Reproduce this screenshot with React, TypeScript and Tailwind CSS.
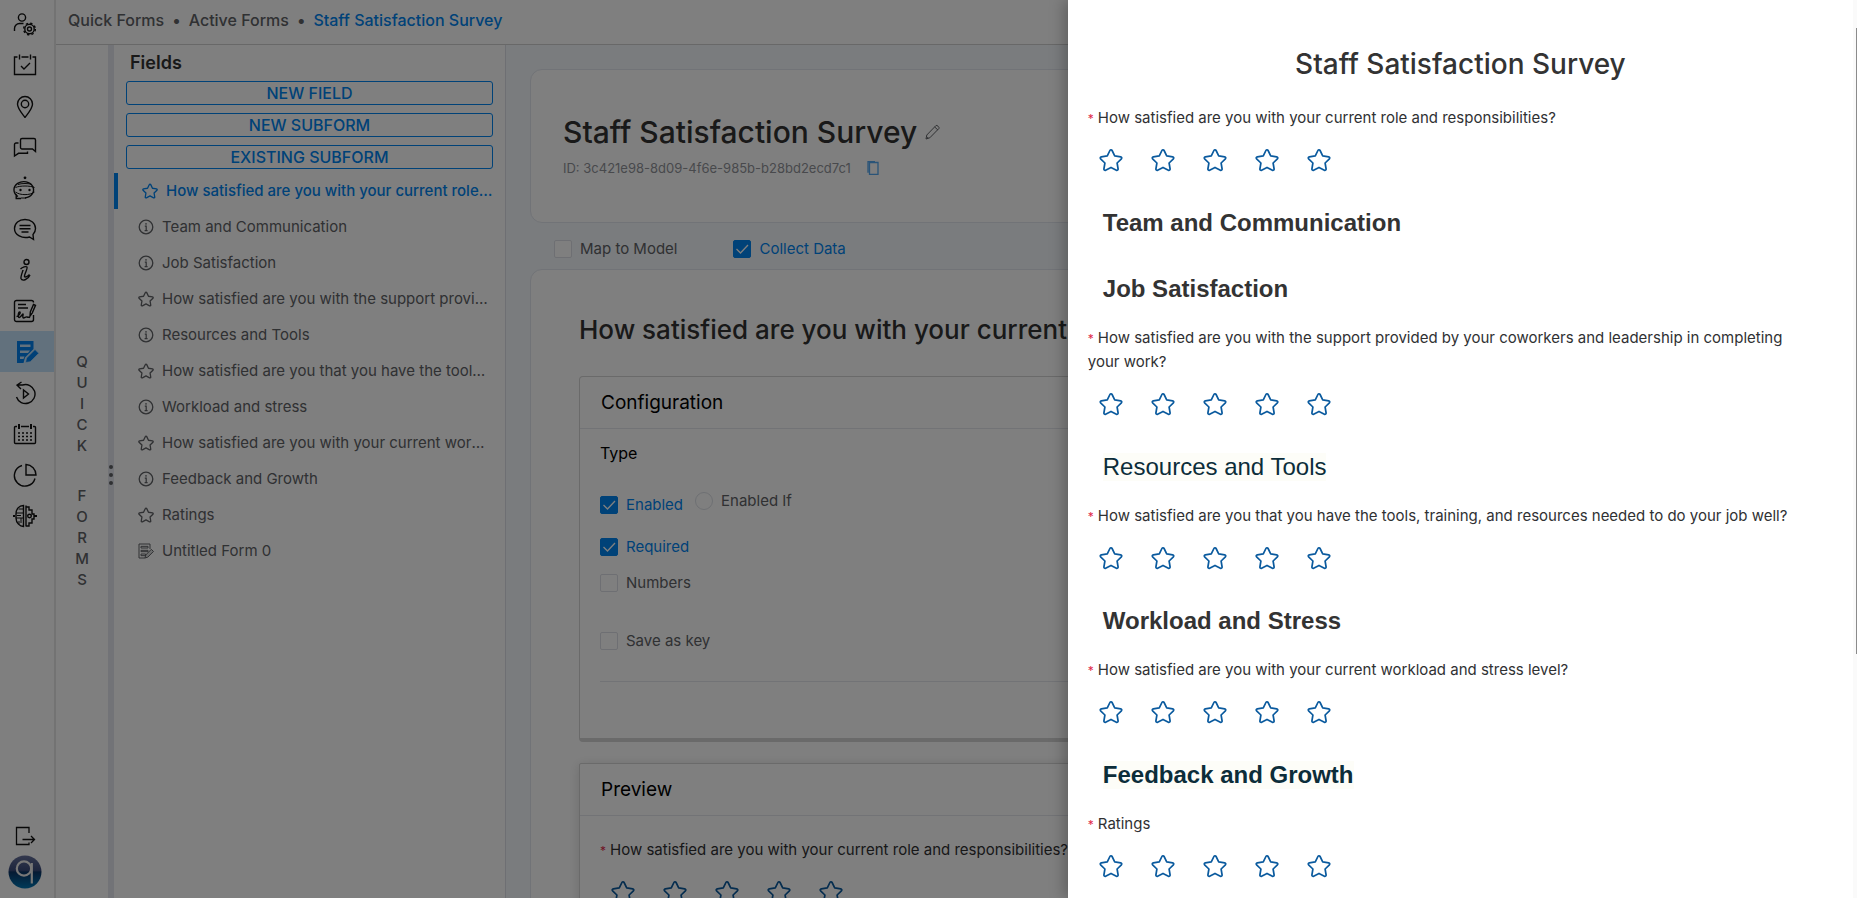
import React, { useState } from "react";

const STAR =
  "M12 1.8c.5 0 .9.3 1.1.7l2.6 5.4 6 .9c1 .2 1.4 1.300.7 2l-4.300 4.200 1 6c.1 1-.9 1.700-1.700 1.200L12 19.400l-5.400 2.800c-.8.5-1.800-.2-1.700-1.200l1-6-4.300-4.200c-.7-.7-.3-1.800.7-2l6-.9 2.600-5.400c.2-.4.6-.7 1.100-.7z";

function StarIcon({ className, stroke }: { className: string; stroke: number }) {
  return (
    <svg viewBox="0 0 24 24" className={className} fill="none" stroke="currentColor" strokeWidth={stroke} strokeLinejoin="round" aria-hidden="true">
      <path d={STAR} />
    </svg>
  );
}

function InfoIcon() {
  return (
    <svg viewBox="0 0 16 16" className="size-4 shrink-0" fill="none" stroke="currentColor" strokeWidth="1.300" aria-hidden="true">
      <circle cx="8" cy="8" r="6.800" />
      <path d="M6.800 7.200H8.200V11.600M6.600 11.600h3" strokeWidth="1.200" />
      <circle cx="8" cy="4.900" r=".8" fill="currentColor" stroke="none" />
    </svg>
  );
}

function FormIcon({ className }: { className: string }) {
  return (
    <svg viewBox="0 0 24 24" className={className} fill="none" stroke="currentColor" strokeWidth="1.500" aria-hidden="true">
      <path d="M18 9V1.500H1.500v21h9" />
      <path d="M4.500 5h10.500v2.500H4.500zM4.500 11h10.500v2H4.500zM4.500 16.500h7v2.500h-7z" />
      <path d="M10.500 22.500l1-4.500 8.500-8.500 3.200 3.200-8.500 8.500z" fill="currentColor" fillOpacity=".25" />
    </svg>
  );
}

const navIcons: { name: string; art: React.ReactNode }[] = [
  {
    name: "User settings",
    art: (
      <>
        <circle cx="9" cy="5.500" r="3.600" />
        <path d="M1.500 19v-2.500a5 5 0 0 1 5-5h4" />
        <circle cx="16.500" cy="17" r="2" />
        <circle cx="16.500" cy="17" r="4.700" />
        <circle cx="16.500" cy="17" r="5.800" strokeWidth="1.500" strokeDasharray="2.280 2.280" />
      </>
    ),
  },
  {
    name: "Tasks",
    art: (
      <>
        <path d="M4.500 4H1.500v17.500h21V4h-3M8.500 4h7" />
        <path d="M6.500 1.500v5M17.500 1.500v5M8 13l3 3 6-6" />
      </>
    ),
  },
  {
    name: "Locations",
    art: (
      <>
        <path d="M12 23.500C9 19.500 4.500 14.500 4.500 10a7.500 7.500 0 0 1 15 0c0 4.500-4.500 9.500-7.500 13.500z" />
        <circle cx="12" cy="10" r="3.700" />
      </>
    ),
  },
  {
    name: "Conversations",
    art: (
      <>
        <path d="M9 3.500h12a1.500 1.500 0 0 1 1.500 1.500v11.500l-3-2.500H9A1.500 1.500 0 0 1 7.500 12.500V5A1.500 1.500 0 0 1 9 3.500z" />
        <path d="M5.500 8H3a1.500 1.500 0 0 0-1.500 1.500v11.500l4-2.700H14.500V16.500" />
      </>
    ),
  },
  {
    name: "Assistant",
    art: (
      <>
        <path d="M5 20.500A9.800 8.200 0 1 1 12 22M3.200 18v4.500H8" />
        <path d="M5 8.500C8 7.200 16 7.200 19 8.500M2.500 11.500C7 9.500 17 9.500 21.500 11.500M2.500 16C7 19.500 17 19.500 21.500 16M8 22h5" strokeWidth="1" />
        <circle cx="7.500" cy="14" r="1.200" fill="currentColor" stroke="none" />
        <circle cx="16.500" cy="14" r="1.200" fill="currentColor" stroke="none" />
        <circle cx="12" cy="1.800" r="1.400" fill="currentColor" stroke="none" />
      </>
    ),
  },
  {
    name: "Messages",
    art: (
      <>
        <path d="M20.500 22.500l-4-2.500C9 22 1.500 18 1.500 11.500 1.500 6 6 2.500 12 2.500S22.500 6 22.500 11.500c0 2.500-1 4.500-2.500 6z" />
        <path d="M6.500 8.500h11M6.500 11.700h11M8.500 15h7" />
      </>
    ),
  },
  {
    name: "Information",
    art: (
      <>
        <circle cx="13.500" cy="4" r="2.500" />
        <path d="M7.500 11c2-2 5.500-3 6.500-2s-3 8-2.500 9.500 3.500-.5 5-2M10 12c0 1-2.500 6-2 8.500 1 3 7 1.500 9-3.500" />
      </>
    ),
  },
  {
    name: "Signatures",
    art: (
      <>
        <path d="M20.500 16v4.500a2 2 0 0 1-2 2H3.500a2 2 0 0 1-2-2v-17a2 2 0 0 1 2-2H18.500a2 2 0 0 1 2 2" />
        <path d="M5 5.500h8M5 9h10" />
        <path d="M3.500 17.500c2 0 4.500-3.500 3.500-4.500s-2.500 3-1.500 5 4-3 4.500-3-1 4 .5 4 2-1.500 3.500-1 2 .5 3 0" />
        <path d="M17 17l.3-4L20.500 5.500l2 .8-3.200 7.500z" />
      </>
    ),
  },
  { name: "Quick Forms", art: null },
  {
    name: "History",
    art: (
      <>
        <path d="M3.500 16a9.500 9.500 0 1 0 6-12H4M8.500 1L4 4l4 4" />
        <path d="M10.500 9v8l5-4z" />
      </>
    ),
  },
  {
    name: "Calendar",
    art: (
      <>
        <path d="M4 4.500H2.500a1 1 0 0 0-1 1v15a1 1 0 0 0 1 1h19a1 1 0 0 0 1-1v-15a1 1 0 0 0-1-1H20M8 4.500h8" />
        <path d="M6 2v5M18 2v5" strokeWidth="2" />
        <path d="M5 11h14M5 14.500h14M5 18h14" strokeWidth="1.600" strokeDasharray="2 2" />
      </>
    ),
  },
  {
    name: "Reports",
    art: (
      <>
        <path d="M9 2.500a10.500 10.500 0 1 0 13 13" />
        <path d="M13 1.500v10.500h10a10.500 10.500 0 0 0-10-10.500z" />
      </>
    ),
  },
  {
    name: "Artificial intelligence",
    art: (
      <>
        <path d="M10.500 1.500C6 1.500 3 5 3 10v4c0 5 4 8.500 7.500 8.500z" />
        <path d="M3 9h7.500M3 14h7.500M4 11.500h4M6 17v3M8 14v5M5.500 5h5" strokeWidth="1" />
        <path d="M13 1.500v21M13 3h3v3h3v4h2v5h-2v4h-3v3h-3" />
        <circle cx="16.500" cy="12" r="1.800" />
        <path d="M0 12h2M21 12h3" strokeWidth="2" />
      </>
    ),
  },
];

function Sidebar() {
  return (
    <nav className="flex w-14 shrink-0 flex-col border-r-2 border-[#e6e6e6] bg-white pt-[3px] text-[#111]">
      {navIcons.map(({ name, art }) => (
        <button
          key={name}
          aria-label={name}
          className={
            art ? "flex h-[41px] items-center justify-center pr-1" : "flex h-[41px] items-center justify-center bg-[#c4e3fb] text-[#0080ee]"
          }
        >
          {art ? (
            <svg viewBox="0 0 24 24" className="size-6" fill="none" stroke="currentColor" strokeWidth="1.400" aria-hidden="true">
              {art}
            </svg>
          ) : (
            <svg viewBox="0 0 24 24" className="size-6" fill="currentColor" aria-hidden="true">
              <path d="M2 1h16.500v8L10 17.500 8.500 23H2zM5 4.500v2.500h10.500V4.500zm0 6v2.500h8l2-2.500zm0 6V19h3.500l1-2.500z" fillRule="evenodd" />
              <path d="M10.500 22.500l1-4.500 8.500-8.500 3.800 3.800-8.500 8.500z" stroke="#c4e3fb" strokeWidth=".7" />
            </svg>
          )}
        </button>
      ))}
      <button aria-label="Sign out" className="mt-auto flex h-9 items-center justify-center pr-1">
        <svg viewBox="0 0 24 24" className="size-6" fill="none" stroke="currentColor" strokeWidth="1.300" aria-hidden="true">
          <path d="M16 9V3.500H3.500v17H16v-2M9.500 15.500h12M18 12l3.500 3.500L18 19" />
        </svg>
      </button>
      <button aria-label="Account" className="mb-2 flex h-9 items-center justify-center pr-1">
        <svg viewBox="0 0 34 34" className="size-[34px]" aria-hidden="true">
          <defs>
            <linearGradient id="orb" x1="0" y1="0" x2="0" y2="1">
              <stop offset="0" stopColor="#66709a" />
              <stop offset=".45" stopColor="#3c4c7c" />
              <stop offset=".5" stopColor="#0b3566" />
              <stop offset="1" stopColor="#0076b4" />
            </linearGradient>
          </defs>
          <circle cx="17" cy="17" r="16.500" fill="url(#orb)" />
          <circle cx="16" cy="13.500" r="7.200" fill="none" stroke="#eee" strokeWidth="2.200" />
          <path d="M23.800 8v20.500" stroke="#eee" strokeWidth="2.200" fill="none" />
        </svg>
      </button>
    </nav>
  );
}

const fields: { kind: "star" | "info" | "form"; label: string }[] = [
  { kind: "star", label: "How satisfied are you with your current role and responsibilities?" },
  { kind: "info", label: "Team and Communication" },
  { kind: "info", label: "Job Satisfaction" },
  { kind: "star", label: "How satisfied are you with the support provided by your coworkers" },
  { kind: "info", label: "Resources and Tools" },
  { kind: "star", label: "How satisfied are you that you have the tools, training, and resources" },
  { kind: "info", label: "Workload and stress" },
  { kind: "star", label: "How satisfied are you with your current workload and stress level?" },
  { kind: "info", label: "Feedback and Growth" },
  { kind: "star", label: "Ratings" },
  { kind: "form", label: "Untitled Form 0" },
];

function FieldsPanel() {
  return (
    <section className="flex w-[392px] shrink-0 flex-col border-r border-[#dcdfe6] bg-white">
      <h2 className="px-4 pt-1 pb-1 text-lg leading-7 font-semibold text-[#333]">Fields</h2>
      <div className="flex flex-col gap-2 pr-3 pl-3">
        {["NEW FIELD", "NEW SUBFORM", "EXISTING SUBFORM"].map((label) => (
          <button key={label} className="h-6 rounded-[3px] border border-[#0084f0] text-base leading-5 font-medium text-[#0084f0]">
            {label}
          </button>
        ))}
      </div>
      <ul className="mt-1">
        {fields.map(({ kind, label }, i) => (
          <li key={label}>
            <button
              className={
                i === 0
                  ? "flex h-9 w-full items-center gap-2 border-l-4 border-[#0084f0] pr-3 pl-6 text-left text-[15px] font-medium text-[#0084f0]"
                  : "flex h-9 w-full items-center gap-2 pr-3.5 pl-6 text-left text-[15px] text-[#606266]"
              }
            >
              {kind === "star" && <StarIcon className="size-4 shrink-0" stroke={2} />}
              {kind === "info" && <InfoIcon />}
              {kind === "form" && <FormIcon className="size-4 shrink-0" />}
              <span className="truncate">{label}</span>
            </button>
          </li>
        ))}
      </ul>
    </section>
  );
}

function Check({ label, defaultChecked = false }: { label: string; defaultChecked?: boolean }) {
  return (
    <label className="flex w-fit items-center gap-2 text-[15px] leading-[18px] text-[#606266] has-checked:text-[#0084f0]">
      <span className="grid size-[18px] place-items-center">
        <input
          type="checkbox"
          defaultChecked={defaultChecked}
          className="peer col-start-1 row-start-1 size-[18px] appearance-none rounded-[2px] border border-[#dcdfe6] bg-white checked:border-[#0084f0] checked:bg-[#0084f0]"
        />
        <svg viewBox="0 0 18 18" className="pointer-events-none col-start-1 row-start-1 size-[18px] opacity-0 peer-checked:opacity-100" fill="none" stroke="#fff" strokeWidth="1.300" aria-hidden="true">
          <path d="M3.500 9l4 4L15 5" />
        </svg>
      </span>
      {label}
    </label>
  );
}

function Rating({ label }: { label: string }) {
  const [value, setValue] = useState(0);
  return (
    <div className="pb-[22px]">
      <p className="pr-5 text-[15px] leading-6 text-[#303133]">
        <span className="mr-1 text-xs text-[#e0284a]">*</span>
        {label}
      </p>
      <div role="group" aria-label={label} className="mt-[18px] flex gap-7 pl-[11px] text-[#0a5a9e]">
        {[1, 2, 3, 4, 5].map((n) => (
          <button key={n} aria-label={`${n} of 5`} aria-pressed={n <= value} onClick={() => setValue(n)} className="size-6">
            <StarIcon className="size-6" stroke={1.7} />
          </button>
        ))}
      </div>
    </div>
  );
}

function Workspace() {
  return (
    <main className="min-w-0 flex-1 overflow-hidden bg-[#f5f8fc] pt-6 pr-5 pl-6">
      <section className="h-[154px] rounded-xl border border-[#e2e6ee] bg-white px-8 pt-[38px]">
        <div className="flex items-center gap-2">
          <h1 className="text-3xl leading-[48px] font-medium text-[#333]">Staff Satisfaction Survey</h1>
          <button aria-label="Rename form" className="text-[#606266]">
            <svg viewBox="0 0 16 16" className="size-4" fill="none" stroke="currentColor" aria-hidden="true">
              <path d="M1 15l.8-4L11 1.500c.8-.8 3.800 1.800 3 2.900L4.800 13.800zM9.700 3l3.200 3M2 12.800l1.200 1.200" />
            </svg>
          </button>
        </div>
        <div className="flex items-center gap-4 text-[13px] leading-6 text-[#909399]">
          ID: 3c421e98-8d09-4f6e-985b-b28bd2ecd7c1
          <button aria-label="Copy ID" className="text-[#55a8f0]">
            <svg viewBox="0 0 12 14" className="h-3.5 w-3" fill="none" stroke="currentColor" strokeWidth="1.300" aria-hidden="true">
              <path d="M2.500 1.500h8.500v12H2.500zM8 .7H1v11" />
            </svg>
          </button>
        </div>
      </section>
      <div className="flex h-[46px] items-center gap-14 pt-1.5 pl-6">
        <Check label="Map to Model" />
        <Check label="Collect Data" defaultChecked />
      </div>
      <section className="rounded-xl border border-[#e2e6ee] bg-white pt-9 pr-8 pb-8 pl-12">
        <h2 className="text-[26px] leading-[48px] font-medium whitespace-nowrap text-[#333]">
          How satisfied are you with your current role and responsibilities?
        </h2>
        <div className="mt-[22px] rounded-[4px] border border-b-4 border-[#d4d4d4] bg-white">
          <h3 className="border-b border-[#e4e7ed] px-[21px] text-[19px] leading-[51px] text-black">Configuration</h3>
          <div className="flex flex-col px-5 pt-3 pb-14">
            <p className="text-base leading-6 text-black">Type</p>
            <div className="mt-[27px] flex items-start gap-3">
              <div className="pt-1">
                <Check label="Enabled" defaultChecked />
              </div>
              <label className="flex items-center gap-2 text-[15px] leading-[18px] text-[#606266]">
                <input type="radio" className="size-[18px] appearance-none rounded-full border border-[#dcdfe6] bg-white" />
                Enabled If
              </label>
            </div>
            <div className="mt-6 flex flex-col gap-[18px]">
              <Check label="Required" defaultChecked />
              <Check label="Numbers" />
            </div>
            <div className="mt-10 border-b border-[#e4e7ed] pb-[31px]">
              <Check label="Save as key" />
            </div>
          </div>
        </div>
        <div className="mt-[21px] rounded-[2px] border border-[#d4d4d4] bg-white shadow-[0_2px_12px_rgba(0,0,0,0.15)]">
          <h3 className="border-b border-[#e4e7ed] px-[21px] text-[19px] leading-[51px] text-black">Preview</h3>
          <div className="px-5 pt-[22px]">
            <Rating label="How satisfied are you with your current role and responsibilities?" />
          </div>
        </div>
      </section>
    </main>
  );
}

function SectionHeading({ children, tone }: { children: string; tone: string }) {
  return (
    <h3 className="flex h-[66px] items-start pt-[15px] pl-[15px] font-['Liberation_Sans',Arial,sans-serif] text-2xl leading-7">
      <span className={tone}>{children}</span>
    </h3>
  );
}

function PreviewDrawer() {
  return (
    <aside className="absolute inset-y-0 right-0 w-[42.5vw] overflow-hidden bg-white pt-10 pr-6 pl-5 shadow-[-4px_0_14px_rgba(0,0,0,0.25)]">
      <h1 className="mb-[18px] text-center text-[28px] leading-[48px] font-medium text-[#333]">Staff Satisfaction Survey</h1>
      <Rating label="How satisfied are you with your current role and responsibilities?" />
      <SectionHeading tone="font-bold text-[#333]">Team and Communication</SectionHeading>
      <SectionHeading tone="font-bold text-[#333]">Job Satisfaction</SectionHeading>
      <Rating label="How satisfied are you with the support provided by your coworkers and leadership in completing your work?" />
      <SectionHeading tone="bg-[#fdfdf8] text-[#0c2d3a]">Resources and Tools</SectionHeading>
      <Rating label="How satisfied are you that you have the tools, training, and resources needed to do your job well?" />
      <SectionHeading tone="font-bold text-[#333]">Workload and Stress</SectionHeading>
      <Rating label="How satisfied are you with your current workload and stress level?" />
      <SectionHeading tone="font-bold bg-[#fdfdf8] text-[#0c2d3a]">Feedback and Growth</SectionHeading>
      <Rating label="Ratings" />
      <div className="absolute inset-y-0 right-0 flex w-1 flex-col items-end bg-[#fafafa] pt-7" aria-hidden="true">
        <div className="h-[72%] w-px bg-[#8b8b8b]" />
      </div>
    </aside>
  );
}

export default function App() {
  return (
    <div className="relative flex h-screen overflow-hidden bg-white font-[Inter,'Open_Sans',sans-serif]">
      <Sidebar />
      <div className="flex min-w-0 flex-1 flex-col">
        <header className="flex h-[45px] shrink-0 items-start border-b border-[#d0d0d0] px-3 pt-2">
          <nav aria-label="Breadcrumb" className="flex gap-2 text-base leading-6 font-medium text-[#606266]">
            <a href="#forms">Quick Forms</a>
            <span>•</span>
            <a href="#active">Active Forms</a>
            <span>•</span>
            <a href="#survey" className="text-[#0084f0]">
              Staff Satisfaction Survey
            </a>
          </nav>
        </header>
        <div className="flex min-h-0 flex-1">
          <div className="flex w-13 shrink-0 flex-col items-center justify-center pb-0.5 text-[15px] leading-[21px] font-medium text-[#606266]">
            {"QUICK".split("").map((c) => (
              <span key={c}>{c}</span>
            ))}
            <span className="h-[29px]" />
            {"FORMS".split("").map((c) => (
              <span key={c}>{c}</span>
            ))}
          </div>
          <div className="flex w-1.5 shrink-0 flex-col items-center justify-center gap-1 bg-[#e4e7ee] pt-1.5">
            <span className="size-1 rounded-full bg-[#606266]" />
            <span className="size-1 rounded-full bg-[#606266]" />
            <span className="size-1 rounded-full bg-[#606266]" />
          </div>
          <FieldsPanel />
          <Workspace />
        </div>
      </div>
      <div className="absolute inset-0 bg-black/50" />
      <PreviewDrawer />
    </div>
  );
}
